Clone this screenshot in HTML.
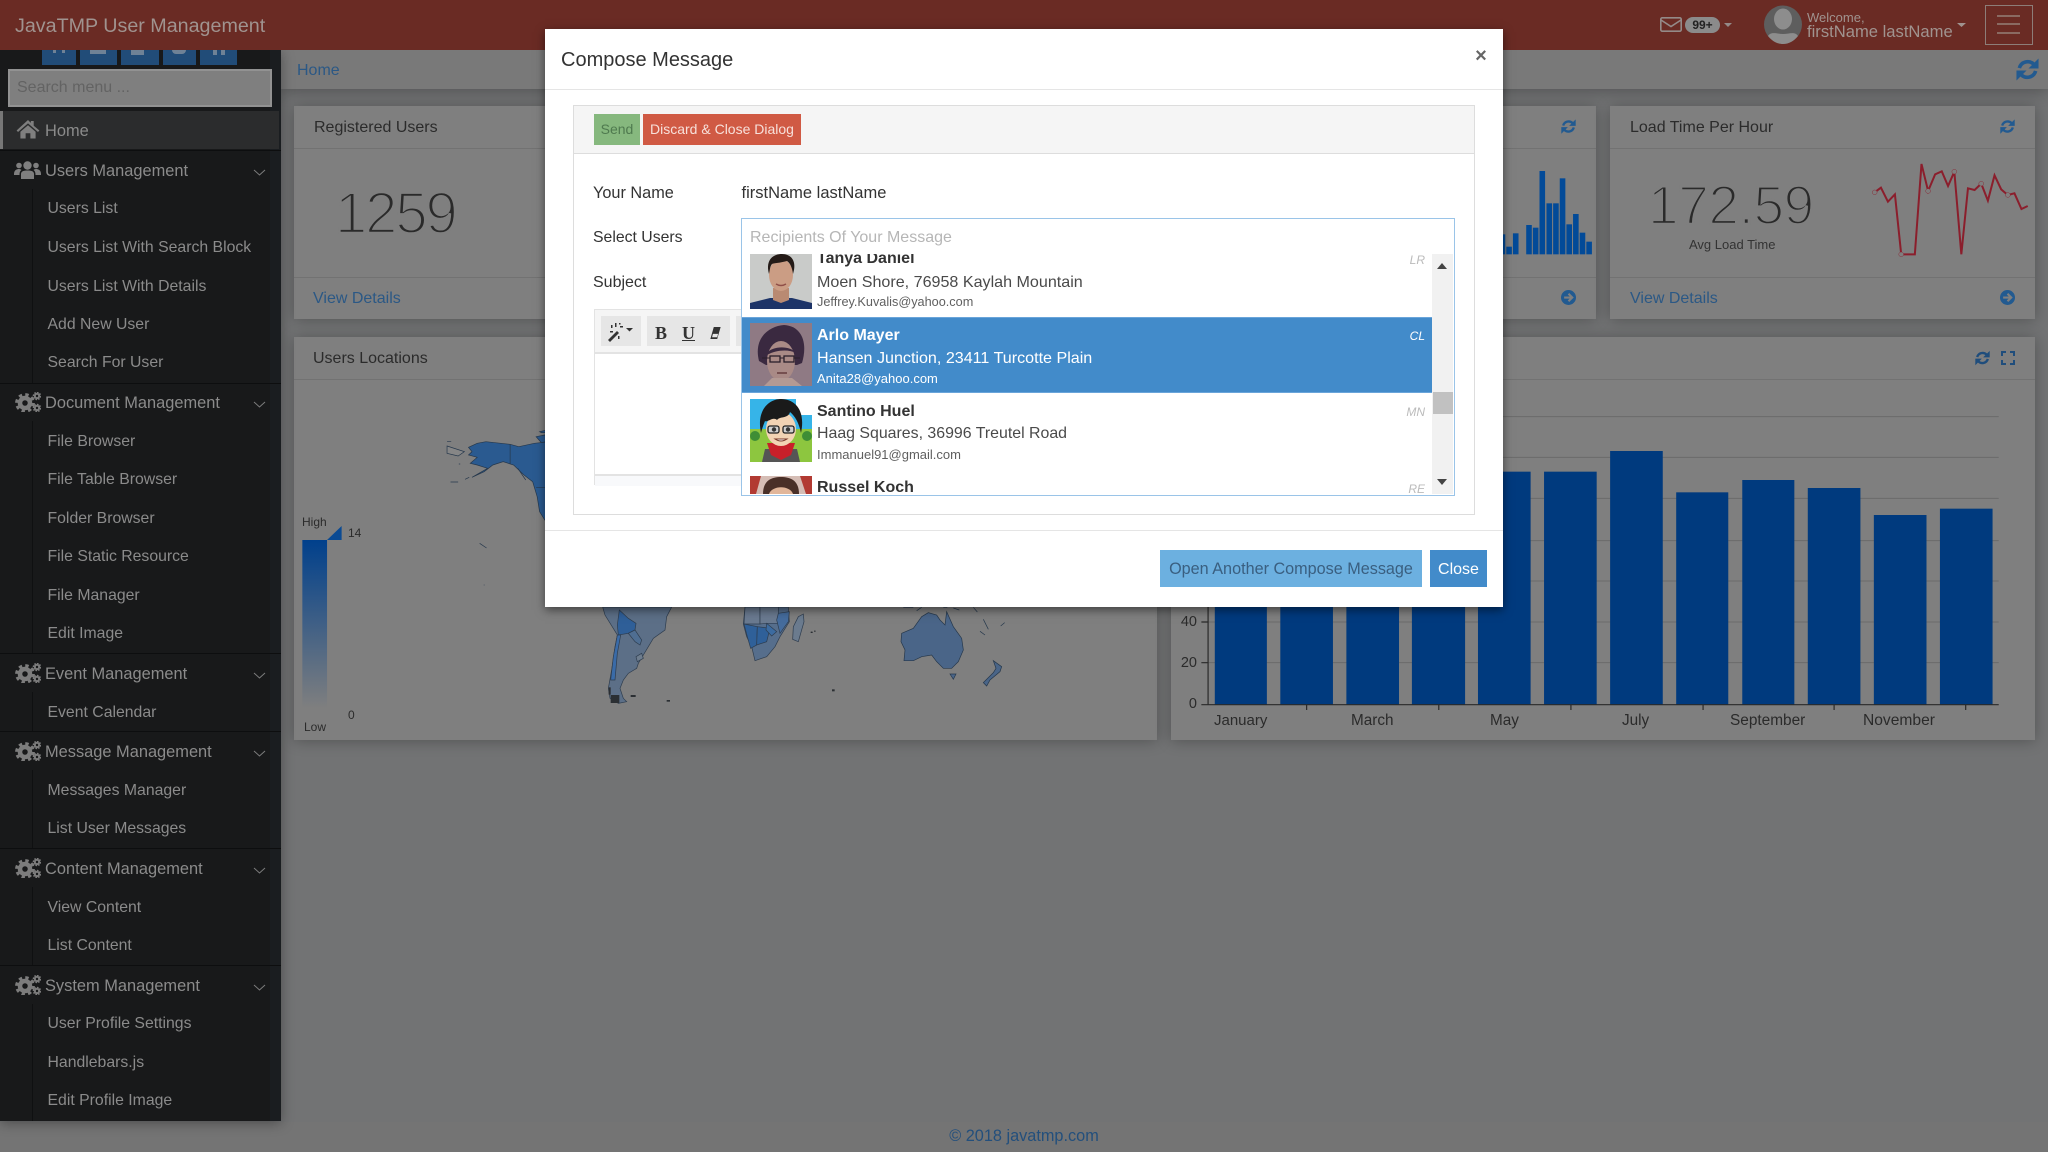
<!DOCTYPE html>
<html lang="en"><head><meta charset="utf-8"><title>JavaTMP User Management</title>
<style>
html,body{margin:0;padding:0;width:2048px;height:1152px;overflow:hidden;background:#727374}
body{position:relative;font-family:"Liberation Sans",Arial,sans-serif;font-size:16px;color:#2b2b2b}
.a{position:absolute}
.t{position:absolute;white-space:nowrap;line-height:20px;height:20px;margin-top:1px}
.card{position:absolute;background:#7f7f7f;box-shadow:0 1px 14px rgba(0,0,0,.28)}
.hl{position:absolute;height:1px;background:#727272}
.m{color:#8b8b8b;font-size:15.8px}
.g{color:#8b8b8b;font-size:16.4px}
.lnk{color:#2b5885}
.sl{position:absolute;left:32px;width:1px;background:#0f1011}
.dv{position:absolute;left:0;width:281px;height:1px;background:#0d0e0f}
svg{position:absolute;overflow:visible}
.ch{left:254px;width:11px;height:6px;fill:none;stroke:#7d7d7d;stroke-width:1}
.cg{left:15px;width:26px;height:20px;color:#7c7c7c}
.ic{color:#225a90}
.nm{font-weight:bold;color:#333}
.ad{color:#4a4a4a;font-size:16.1px}
.em{color:#5f5f5f;font-size:13px}
.tag{font-style:italic;font-size:12px;color:#bbb;text-align:right;width:30px;left:1395px}
.big{color:#2a2a2a;-webkit-text-stroke:2.4px #7f7f7f}
</style></head><body>
<svg width="0" height="0" style="position:absolute"><defs>
<symbol id="sync" viewBox="0 0 24 24"><path d="M3.500 10.500A9 9 0 0 1 18.500 6.500" fill="none" stroke="currentColor" stroke-width="3.800"/><polygon points="23.500,0.500 23.500,11 13,11" fill="currentColor"/><path d="M20.500 13.500A9 9 0 0 1 5.500 17.500" fill="none" stroke="currentColor" stroke-width="3.800"/><polygon points="0.500,23.500 0.500,13 11,13" fill="currentColor"/></symbol>
<symbol id="go" viewBox="0 0 24 24"><circle cx="12" cy="12" r="12" fill="currentColor"/><path d="M5 12H17M12 6l6 6-6 6" fill="none" stroke="#7f7f7f" stroke-width="3.400"/></symbol>
<symbol id="cogs" viewBox="0 0 26 20"><circle cx="10" cy="11" r="5" fill="none" stroke="currentColor" stroke-width="4.500"/><circle cx="10" cy="11" r="8.400" fill="none" stroke="currentColor" stroke-width="3" stroke-dasharray="3.400 3.200"/><circle cx="22" cy="4" r="2.200" fill="none" stroke="currentColor" stroke-width="2"/><circle cx="22" cy="4" r="3.600" fill="none" stroke="currentColor" stroke-width="1.400" stroke-dasharray="1.600 1.200"/><circle cx="22" cy="16" r="2.200" fill="none" stroke="currentColor" stroke-width="2"/><circle cx="22" cy="16" r="3.600" fill="none" stroke="currentColor" stroke-width="1.400" stroke-dasharray="1.600 1.200"/></symbol>
</defs></svg>

<div class="a" style="left:0;top:1122px;width:2048px;height:30px;background:#747474"></div>
<!-- main top bar -->
<div class="a" style="left:281px;top:50px;width:1767px;height:39px;background:#797979;box-shadow:0 2px 16px rgba(0,0,0,.3)"></div>
<div class="t lnk" style="left:297px;top:60px">Home</div>
<svg class="ic" style="left:2016px;top:58px;width:23px;height:23px"><use href="#sync"/></svg>

<!-- stat cards -->
<div class="card" style="left:294px;top:106px;width:400px;height:213px"></div>
<div class="hl" style="left:294px;top:148px;width:400px"></div><div class="hl" style="left:294px;top:277px;width:400px"></div>
<div class="t" style="left:314px;top:117px">Registered Users</div>
<div class="t big" style="left:335px;top:203px;font-size:58px;letter-spacing:-2.100px">1259</div>
<div class="t lnk" style="left:313px;top:288px">View Details</div>

<div class="card" style="left:1400px;top:106px;width:196px;height:213px"></div>
<div class="hl" style="left:1400px;top:148px;width:196px"></div><div class="hl" style="left:1400px;top:277px;width:196px"></div>
<svg class="ic" style="left:1561px;top:119px;width:15px;height:15px"><use href="#sync"/></svg>
<svg class="ic" style="left:1561px;top:290px;width:15px;height:15px"><use href="#go"/></svg>
<svg style="left:1500px;top:0;width:548px;height:340px" viewBox="0 0 1568 1020" preserveAspectRatio="none" fill="#024a98">
<rect x="8" y="703" width="7" height="60"/><rect x="18" y="740" width="16" height="23"/><rect x="37" y="700" width="16" height="63"/><rect x="75" y="675" width="16" height="88"/><rect x="94" y="683" width="16" height="80"/><rect x="113" y="513" width="16" height="250"/><rect x="133" y="610" width="16" height="153"/><rect x="152" y="610" width="16" height="153"/><rect x="171" y="535" width="16" height="228"/><rect x="190" y="673" width="16" height="90"/><rect x="209" y="642" width="16" height="121"/><rect x="228" y="698" width="16" height="65"/><rect x="247" y="725" width="16" height="38"/>
</svg>

<div class="card" style="left:1610px;top:106px;width:425px;height:213px"></div>
<div class="hl" style="left:1610px;top:148px;width:425px"></div><div class="hl" style="left:1610px;top:277px;width:425px"></div>
<div class="t" style="left:1630px;top:117px">Load Time Per Hour</div>
<svg class="ic" style="left:2000px;top:119px;width:15px;height:15px"><use href="#sync"/></svg>
<div class="t big" style="left:1648px;top:194px;font-size:55px;letter-spacing:-.4px">172.59</div>
<div class="t" style="left:1689px;top:234px;font-size:13px;color:#333">Avg Load Time</div>
<div class="t lnk" style="left:1630px;top:288px">View Details</div>
<svg class="ic" style="left:2000px;top:290px;width:15px;height:15px"><use href="#go"/></svg>
<svg style="left:1500px;top:0;width:548px;height:340px" viewBox="0 0 1568 1020" preserveAspectRatio="none">
<polyline fill="none" stroke="#8b1e2c" stroke-width="2" vector-effect="non-scaling-stroke" points="1072,577 1090,563 1110,605 1130,583 1148,763 1187,763 1206,492 1225,573 1245,523 1264,514 1282,558 1300,515 1320,763 1339,565 1358,570 1377,551 1396,602 1415,526 1434,568 1453,585 1472,580 1492,627 1510,618"/>
<g fill="#7f7f7f" stroke="#8b1e2c" stroke-width="1.200"><ellipse cx="1072" cy="577" rx="7" ry="7"/><ellipse cx="1148" cy="763" rx="7" ry="7"/><ellipse cx="1225" cy="573" rx="7" ry="7"/><ellipse cx="1300" cy="515" rx="7" ry="7"/><ellipse cx="1377" cy="551" rx="7" ry="7"/><ellipse cx="1453" cy="585" rx="7" ry="7"/></g>
</svg>

<!-- map card -->
<div class="card" style="left:294px;top:337px;width:863px;height:403px"></div>
<div class="hl" style="left:294px;top:379px;width:863px"></div>
<div class="t" style="left:313px;top:348px">Users Locations</div>
<svg style="left:290px;top:330px;width:880px;height:430px" viewBox="0 0 1568 1290" preserveAspectRatio="none">
<defs><linearGradient id="lg" x1="0" y1="0" x2="0" y2="1"><stop offset="0" stop-color="#00408c"/><stop offset="1" stop-color="#7f7f7f"/></linearGradient></defs>
<rect x="22" y="630" width="44" height="505" fill="url(#lg)"/><polygon points="66,630 92,588 92,630" fill="#0a4a93"/>
</svg>
<!-- north america -->
<svg style="left:420px;top:400px;width:130px;height:200px" viewBox="0 0 375 600" preserveAspectRatio="none">
<g stroke="#26384c" stroke-width=".7">
<path vector-effect="non-scaling-stroke" fill="#2a5a90" d="M140 142 165 130 190 125 260 133 285 140 330 130 375 125V372L360 360 345 335 338 290 325 245 300 225 270 195 240 185 210 195 185 215 150 232 195 205 165 195 145 190 165 172 140 165 150 155Z"/>
<path vector-effect="non-scaling-stroke" fill="#2a5a90" d="M335 110 360 105 375 112V122L350 128ZM345 95 375 88V98L350 98Z"/>
<path vector-effect="non-scaling-stroke" fill="none" d="M260 133V192M335 262H375"/>
<path vector-effect="non-scaling-stroke" fill="#868686" d="M78 138 128 155 110 168 78 160Z"/>
<path vector-effect="non-scaling-stroke" fill="none" d="M78 124H90M88 246H110M130 238 142 232M172 430 192 444M112 192H116M184 555H186M282 205 305 240"/>
</g></svg>
<!-- south america, southern africa -->
<svg style="left:560px;top:600px;width:260px;height:130px" viewBox="0 0 780 390" preserveAspectRatio="none">
<g stroke="#2e3d4f" stroke-width=".7">
<path vector-effect="non-scaling-stroke" fill="#5c6f87" d="M128 21H335L320 50 315 90 280 115 265 140 250 165 235 190 230 205 205 220 190 240 180 265 190 295 200 305 175 310 150 295 145 265 155 210 165 140 172 105 135 45Z"/>
<path vector-effect="non-scaling-stroke" fill="#2f5f98" d="M178 30 205 55 228 70 225 90 205 100 175 105 172 75Z"/>
<path vector-effect="non-scaling-stroke" fill="#3a6ba8" d="M172 105 182 105 172 160 165 240 152 240 160 170Z"/>
<path vector-effect="non-scaling-stroke" fill="#4f6e92" d="M205 100 225 90 245 120 240 135 225 125Z"/>
<path vector-effect="non-scaling-stroke" fill="#6e7d8e" d="M228 170 245 160 250 175 232 185Z"/>
<path vector-effect="non-scaling-stroke" fill="#566e8c" d="M555 21H685L688 65 660 110 645 140 620 170 585 182 575 140 560 110 550 72Z"/>
<path vector-effect="non-scaling-stroke" fill="#6a7a90" d="M555 21H600V72L552 72Z"/>
<path vector-effect="non-scaling-stroke" fill="#6a7a90" d="M600 21H655V70L620 70 600 72Z"/>
<path vector-effect="non-scaling-stroke" fill="#2f6099" d="M552 72 592 80 590 135 572 145 562 110Z"/>
<path vector-effect="non-scaling-stroke" fill="#2f6099" d="M592 80 630 85 620 125 590 135Z"/>
<path vector-effect="non-scaling-stroke" fill="#3c6ba0" d="M620 70 650 95 635 108 618 90Z"/>
<path vector-effect="non-scaling-stroke" fill="#456c9d" d="M655 40 688 35 685 65 660 100 650 60Z"/>
<path vector-effect="non-scaling-stroke" fill="#6b7b8e" d="M715 50 730 42 732 65 715 125 698 118 700 80Z"/>
</g>
<g fill="#2b2f33"><rect x="212" y="285" width="15" height="6"/><rect x="320" y="300" width="10" height="5"/><rect x="146" y="262" width="6" height="22"/><rect x="152" y="285" width="26" height="24"/><rect x="752" y="95" width="4" height="4"/><rect x="764" y="92" width="3" height="3"/></g>
</svg>
<!-- australia -->
<svg style="left:740px;top:600px;width:300px;height:130px" viewBox="0 0 900 390" preserveAspectRatio="none">
<g stroke="#26384c" stroke-width=".7">
<path vector-effect="non-scaling-stroke" fill="#4a6588" d="M485 100 520 85 545 50 565 38 590 45 600 60 615 75 620 35 640 80 665 115 670 150 655 185 635 205 610 205 590 185 575 165 545 170 520 182 492 182 495 150 483 125Z"/>
<path vector-effect="non-scaling-stroke" fill="#4a6588" d="M630 222H648L640 238Z"/>
<path vector-effect="non-scaling-stroke" fill="#4a6588" d="M760 182 785 200 780 215 750 240 740 258 730 248 760 218 768 205Z"/>
<path vector-effect="non-scaling-stroke" fill="none" d="M490 22H520M530 32 545 22M610 22H622M640 24 658 30M700 22 712 36M730 58 745 88M720 94 735 105M782 78 794 68"/>
</g>
<g fill="#2b2f33"><rect x="276" y="268" width="8" height="6"/><rect x="214" y="95" width="4" height="4"/><rect x="222" y="92" width="3" height="3"/></g>
</svg>
<div class="t" style="left:302px;top:511px;font-size:12px">High</div>
<div class="t" style="left:348px;top:522px;font-size:12px">14</div>
<div class="t" style="left:348px;top:704px;font-size:12px">0</div>
<div class="t" style="left:304px;top:716px;font-size:12px">Low</div>

<!-- chart card -->
<div class="card" style="left:1171px;top:337px;width:864px;height:403px"></div>
<div class="hl" style="left:1171px;top:379px;width:864px"></div>
<svg style="left:1975px;top:350px;width:15px;height:16px;color:#1f4d7c"><use href="#sync"/></svg>
<svg style="left:2001px;top:351px;width:14px;height:14px" viewBox="0 0 14 14" fill="none" stroke="#1f4d7c" stroke-width="2"><path d="M1 5V1H5M9 1H13V5M13 9V13H9M5 13H1V9"/></svg>
<svg style="left:1170px;top:330px;width:878px;height:430px" viewBox="0 0 1568 1290" preserveAspectRatio="none">
<g stroke="#6b6b6b" stroke-width="1"><path vector-effect="non-scaling-stroke" d="M60 260H1480M60 382H1480M60 505H1480M60 632H1480M60 753H1480M60 876H1480M60 998H1480"/></g>
<g fill="#003a7e"><rect x="80" y="700" width="93" height="424"/><rect x="197" y="700" width="94" height="424"/><rect x="315" y="700" width="94" height="424"/><rect x="432" y="700" width="95" height="424"/><rect x="550" y="425" width="94" height="699"/><rect x="668" y="425" width="94" height="699"/><rect x="786" y="363" width="94" height="761"/><rect x="904" y="487" width="93" height="637"/><rect x="1022" y="450" width="93" height="674"/><rect x="1139" y="474" width="94" height="650"/><rect x="1257" y="555" width="94" height="569"/><rect x="1375" y="536" width="94" height="588"/></g>
<path fill="none" stroke="#2a2a2a" stroke-width="1.200" vector-effect="non-scaling-stroke" d="M68 830V1124M56 876H68M56 998H68M56 1124H1480M244 1124V1140M480 1124V1140M716 1124V1140M952 1124V1140M1186 1124V1140M1421 1124V1140"/>
</svg>
<div class="t" style="left:1170px;width:27px;text-align:right;top:611px;font-size:14.500px">40</div>
<div class="t" style="left:1170px;width:27px;text-align:right;top:652px;font-size:14.500px">20</div>
<div class="t" style="left:1170px;width:27px;text-align:right;top:693px;font-size:14.500px">0</div>
<div class="t" style="left:1214px;top:710px;font-size:15px">January</div>
<div class="t" style="left:1351px;top:710px;font-size:15.300px">March</div>
<div class="t" style="left:1490px;top:710px;font-size:15.300px">May</div>
<div class="t" style="left:1622px;top:710px;font-size:15.300px">July</div>
<div class="t" style="left:1730px;top:710px;font-size:15.400px">September</div>
<div class="t" style="left:1863px;top:710px;font-size:15.600px">November</div>

<div class="t" style="left:0;width:2048px;text-align:center;top:1125px;color:#234f7c;font-size:16.300px">© 2018 javatmp.com</div>

<!-- sidebar -->
<div class="a" style="left:0;top:50px;width:281px;height:1071px;background:#18191a;box-shadow:0 2px 12px rgba(0,0,0,.35)"></div>
<div class="a" style="left:270px;top:50px;width:11px;height:1071px;background:#1a1d20"></div>
<div class="a" style="left:42px;top:50px;width:34px;height:15px;background:#214c78"></div>
<div class="a" style="left:80px;top:50px;width:37px;height:15px;background:#214c78"></div>
<div class="a" style="left:121px;top:50px;width:38px;height:15px;background:#214c78"></div>
<div class="a" style="left:163px;top:50px;width:33px;height:15px;background:#214c78"></div>
<div class="a" style="left:200px;top:50px;width:37px;height:15px;background:#214c78"></div>
<div class="a" style="left:53px;top:50px;width:3px;height:3px;background:#6f8296"></div><div class="a" style="left:62px;top:50px;width:3px;height:3px;background:#6f8296"></div>
<div class="a" style="left:90px;top:50px;width:16px;height:4px;background:#6f8296"></div>
<div class="a" style="left:131px;top:50px;width:13px;height:5px;background:#6f8296"></div>
<div class="a" style="left:172px;top:50px;width:14px;height:4px;border-radius:0 0 7px 7px;background:#6f8296"></div>
<div class="a" style="left:213px;top:50px;width:4px;height:5px;background:#6f8296"></div><div class="a" style="left:221px;top:50px;width:4px;height:5px;background:#6f8296"></div>
<div class="a" style="left:8px;top:69px;width:260px;height:34px;background:#7f7f7f;border:2px solid #929292"></div>
<div class="t" style="left:17px;top:77px;color:#636363">Search menu ...</div>
<div class="a" style="left:0;top:111px;width:279px;height:38px;background:#2b2c2d"></div>
<div class="a" style="left:0;top:111px;width:3px;height:38px;background:#777"></div>
<svg style="left:16px;top:120px;width:24px;height:19px" viewBox="0 0 24 20" fill="#7f7f7f"><path d="M12 0 15 3V1H18V6L24 11 22.500 12.600 12 3.500 1.500 12.600 0 11ZM4 12.400 12 5.500 20 12.400V19.500H14.500V14H9.500V19.500H4Z"/></svg>
<div class="t g" style="left:45px;top:120px">Home</div>
<div class="dv" style="top:150px"></div>

<svg style="left:14px;top:161px;width:27px;height:18px" viewBox="0 0 27 18" fill="#7f7f7f"><circle cx="13.500" cy="4.500" r="4.200"/><circle cx="5" cy="4.500" r="2.800"/><circle cx="22" cy="4.500" r="2.800"/><path d="M7 18V13C7 10 10 9.500 13.500 9.500S20 10 20 13V18Z"/><path d="M0 13C0 9 3 8 5 8 6.500 8 7 8.500 7.500 9 6 10 5.500 11.500 5.500 14H0ZM27 13C27 9 24 8 22 8 20.500 8 20 8.500 19.500 9 21 10 21.500 11.500 21.500 14H27Z"/></svg>
<div class="t g" style="left:45px;top:160px">Users Management</div>
<svg class="ch" style="top:170px" viewBox="0 0 11 6"><path d="M0 0 5.500 5 11 0"/></svg>
<div class="sl" style="top:189px;height:194px"></div>
<div class="t m" style="left:47.500px;top:198px">Users List</div>
<div class="t m" style="left:47.500px;top:237px">Users List With Search Block</div>
<div class="t m" style="left:47.500px;top:276px">Users List With Details</div>
<div class="t m" style="left:47.500px;top:314px">Add New User</div>
<div class="t m" style="left:47.500px;top:352px">Search For User</div>
<div class="dv" style="top:383px"></div>

<svg class="cg" style="top:392px"><use href="#cogs"/></svg>
<div class="t g" style="left:45px;top:392px">Document Management</div>
<svg class="ch" style="top:402px" viewBox="0 0 11 6"><path d="M0 0 5.500 5 11 0"/></svg>
<div class="sl" style="top:421px;height:232px"></div>
<div class="t m" style="left:47.500px;top:431px">File Browser</div>
<div class="t m" style="left:47.500px;top:469px">File Table Browser</div>
<div class="t m" style="left:47.500px;top:508px">Folder Browser</div>
<div class="t m" style="left:47.500px;top:546px">File Static Resource</div>
<div class="t m" style="left:47.500px;top:585px">File Manager</div>
<div class="t m" style="left:47.500px;top:623px">Edit Image</div>
<div class="dv" style="top:653px"></div>

<svg class="cg" style="top:663px"><use href="#cogs"/></svg>
<div class="t g" style="left:45px;top:663px">Event Management</div>
<svg class="ch" style="top:673px" viewBox="0 0 11 6"><path d="M0 0 5.500 5 11 0"/></svg>
<div class="sl" style="top:692px;height:39px"></div>
<div class="t m" style="left:47.500px;top:702px">Event Calendar</div>
<div class="dv" style="top:731px"></div>

<svg class="cg" style="top:741px"><use href="#cogs"/></svg>
<div class="t g" style="left:45px;top:741px">Message Management</div>
<svg class="ch" style="top:751px" viewBox="0 0 11 6"><path d="M0 0 5.500 5 11 0"/></svg>
<div class="sl" style="top:770px;height:78px"></div>
<div class="t m" style="left:47.500px;top:780px">Messages Manager</div>
<div class="t m" style="left:47.500px;top:818px">List User Messages</div>
<div class="dv" style="top:848px"></div>

<svg class="cg" style="top:858px"><use href="#cogs"/></svg>
<div class="t g" style="left:45px;top:858px">Content Management</div>
<svg class="ch" style="top:868px" viewBox="0 0 11 6"><path d="M0 0 5.500 5 11 0"/></svg>
<div class="sl" style="top:887px;height:78px"></div>
<div class="t m" style="left:47.500px;top:897px">View Content</div>
<div class="t m" style="left:47.500px;top:935px">List Content</div>
<div class="dv" style="top:965px"></div>

<svg class="cg" style="top:975px"><use href="#cogs"/></svg>
<div class="t g" style="left:45px;top:975px">System Management</div>
<svg class="ch" style="top:985px" viewBox="0 0 11 6"><path d="M0 0 5.500 5 11 0"/></svg>
<div class="sl" style="top:1004px;height:117px"></div>
<div class="t m" style="left:47.500px;top:1013px">User Profile Settings</div>
<div class="t m" style="left:47.500px;top:1052px">Handlebars.js</div>
<div class="t m" style="left:47.500px;top:1090px">Edit Profile Image</div>

<!-- header -->
<div class="a" style="left:0;top:0;width:2048px;height:50px;background:#6a2b24"></div>
<div class="t" style="left:15px;top:15px;font-size:19.700px;color:#a0938f">JavaTMP User Management</div>
<svg style="left:1660px;top:17px;width:22px;height:15px" viewBox="0 0 22 15" fill="none" stroke="#948a88" stroke-width="1.600"><rect x=".8" y=".8" width="20.400" height="13.400" rx="1.500"/><path d="M1 3 11 9.500 21 3"/></svg>
<div class="a" style="left:1685px;top:17px;width:35px;height:16px;border-radius:8px;background:#8b8b8b;color:#222;font-size:12px;font-weight:bold;text-align:center;line-height:16px">99+</div>
<svg style="left:1724px;top:23px;width:8px;height:4px" viewBox="0 0 8 4" fill="#948a88"><path d="M0 0H8L4 4Z"/></svg>
<svg style="left:1764px;top:5px;width:38px;height:39px" viewBox="0 0 38 39"><circle cx="19" cy="19.500" r="19" fill="#5e5e5e"/><ellipse cx="19" cy="14" rx="9" ry="10.500" fill="#8d8d8d"/><path d="M4 31C7 26 13 29 19 29S31 26 34 31C30 36 25 39 19 39S8 36 4 31Z" fill="#8d8d8d"/></svg>
<div class="t" style="left:1807px;top:7px;font-size:13px;color:#a0938f">Welcome,</div>
<div class="t" style="left:1807px;top:21px;font-size:16.600px;color:#a0938f">firstName lastName</div>
<svg style="left:1957px;top:23px;width:9px;height:4px" viewBox="0 0 9 4" fill="#a0938f"><path d="M0 0H9L4.500 4Z"/></svg>
<div class="a" style="left:1985px;top:5px;width:46px;height:38px;border:1px solid #8d7d78"></div>
<div class="a" style="left:1997px;top:15px;width:23px;height:1.500px;background:#8a6a62"></div>
<div class="a" style="left:1997px;top:23px;width:23px;height:1.500px;background:#8a6a62"></div>
<div class="a" style="left:1997px;top:32px;width:23px;height:1.500px;background:#8a6a62"></div>

<!-- modal -->
<div class="a" style="left:545px;top:29px;width:958px;height:578px;background:#fff;box-shadow:0 3px 9px rgba(0,0,0,.5)"></div>
<div class="a" style="left:545px;top:89px;width:958px;height:1px;background:#e5e5e5"></div>
<div class="t" style="left:561px;top:49px;font-size:20px;color:#333">Compose Message</div>
<div class="t" style="left:1474px;top:45px;width:14px;text-align:center;font-size:20px;font-weight:bold;color:#666">×</div>
<div class="a" style="left:573px;top:105px;width:900px;height:408px;border:1px solid #ddd"></div>
<div class="a" style="left:574px;top:106px;width:900px;height:47px;background:#f5f5f5;border-bottom:1px solid #ddd"></div>
<div class="a" style="left:594px;top:114px;width:46px;height:31px;background:#86b87e;color:#4f7a4f;font-size:14px;text-align:center;line-height:31px">Send</div>
<div class="a" style="left:643px;top:114px;width:158px;height:31px;background:#d05a44;color:#f7e0da;font-size:14px;text-align:center;line-height:31px;white-space:nowrap">Discard &amp; Close Dialog</div>
<div class="t" style="left:593px;top:182px;color:#333;font-size:16.300px">Your Name</div>
<div class="t" style="left:741.500px;top:182px;font-size:16.500px;color:#333">firstName lastName</div>
<div class="t" style="left:593px;top:227px;color:#333;font-size:15.800px">Select Users</div>
<div class="t" style="left:593px;top:272px;color:#333">Subject</div>

<!-- editor -->
<div class="a" style="left:594px;top:309px;width:160px;height:176px;background:#fff;border:1px solid #e3e3e3;box-sizing:border-box"></div>
<div class="a" style="left:595px;top:310px;width:160px;height:42px;background:#f5f5f5;border-bottom:2px solid #e3e3e3"></div>
<div class="a" style="left:601px;top:316px;width:40px;height:30px;background:#e6e6e6"></div>
<div class="a" style="left:647px;top:316px;width:83px;height:30px;background:#e6e6e6"></div>
<div class="a" style="left:736px;top:316px;width:20px;height:30px;background:#e6e6e6"></div>
<div class="a" style="left:595px;top:474px;width:160px;height:10px;background:#f8f9fb;border-top:2px solid #e3e3e3"></div>
<svg style="left:606px;top:322px;width:28px;height:20px" viewBox="0 0 28 20" fill="#333"><path d="M2 18 11 9 13 11 4 20Z"/><rect x="5" y="3" width="1.500" height="3"/><rect x="9" y="1" width="1.500" height="4"/><rect x="14" y="4" width="3" height="1.500"/><rect x="13" y="1" width="1.500" height="1.500"/><rect x="4" y="9" width="3" height="1.500"/><rect x="12" y="14" width="1.500" height="3"/><path d="M20 6H27L23.500 9.500Z"/></svg>
<div class="t" style="left:655px;top:322px;font-family:'Liberation Serif',serif;font-weight:bold;font-size:18px;color:#333">B</div>
<div class="t" style="left:682px;top:322px;font-family:'Liberation Serif',serif;font-weight:bold;font-size:18px;color:#333;text-decoration:underline">U</div>
<svg style="left:710px;top:327px;width:11px;height:12px" viewBox="0 0 12 14"><path d="M4 0H12L8 14H0Z" fill="#333"/><path d="M3 8H9L8 12H2Z" fill="#e6e6e6"/></svg>

<!-- select box -->
<div class="a" style="left:741px;top:218px;width:712px;height:276px;background:#fff;border:1px solid #9ac4e8"></div>
<div class="t" style="left:750px;top:227px;color:#b6b6b6">Recipients Of Your Message</div>
<div class="a" style="left:742px;top:254px;width:690px;height:240px;overflow:hidden">
  <div class="t nm" style="left:75px;top:-6px">Tanya Daniel</div>
  <div class="t ad" style="left:75px;top:17px">Moen Shore, 76958 Kaylah Mountain</div>
  <div class="t em" style="left:75px;top:37px;font-size:12.700px">Jeffrey.Kuvalis@yahoo.com</div>
  <svg style="left:8px;top:0;width:62px;height:55px" viewBox="0 0 62 55"><rect width="62" height="55" fill="#c9cbc9"/><path d="M0 55V49L20 44H42L62 49V55Z" fill="#1d3468"/><path d="M23 34H39V46L31 49 23 46Z" fill="#b98a72"/><ellipse cx="31" cy="21" rx="12" ry="16" fill="#cb9d84"/><path d="M19 20C15 5 24 0 32 0 42 0 47 8 43 20 42 13 40 9 37 7 30 9 24 9 22 10 20 12 20 16 19 20Z" fill="#241b17"/><path d="M26 30Q31 33 36 30" stroke="#8f4f48" stroke-width="1.500" fill="none"/></svg>
</div>
<div class="a" style="left:742px;top:317px;width:690px;height:76px;background:#428bca;border-top:1px solid #6aa5da;border-bottom:1px solid #6aa5da;box-sizing:border-box"></div>
<svg style="left:750px;top:323px;width:62px;height:63px" viewBox="0 0 62 63"><rect width="62" height="63" fill="#8f7a84"/><path d="M9 38C3 14 20 3 34 2 52 3 58 20 52 40L47 42 16 42Z" fill="#3a2940"/><ellipse cx="31" cy="38" rx="14" ry="20" fill="#a98a86"/><path d="M17 30C22 23 40 22 46 30 38 26 26 27 17 32Z" fill="#3a2940"/><rect x="20" y="33" width="10" height="6" fill="none" stroke="#2a1f2a" stroke-width="1.300"/><rect x="34" y="33" width="10" height="6" fill="none" stroke="#2a1f2a" stroke-width="1.300"/><path d="M12 35H20M44 35H50M30 35H34" stroke="#2a1f2a"/><path d="M27 50H37" stroke="#70494a" stroke-width="1.800"/><path d="M14 63 22 55H42L52 63Z" fill="#b39a94"/></svg>
<svg style="left:750px;top:399px;width:62px;height:63px" viewBox="0 0 62 63"><rect width="62" height="30" fill="#36b4e8"/><rect x="46" y="0" width="16" height="16" fill="#fff"/><rect y="30" width="62" height="33" fill="#8dc63f"/><circle cx="5" cy="37" r="5" fill="#3e8e35"/><circle cx="57" cy="37" r="5" fill="#3e8e35"/><path d="M12 63 15 50H47L50 63Z" fill="#555"/><path d="M17 44H45L41 56 31 61 21 56Z" fill="#c8202a"/><ellipse cx="31" cy="30" rx="15" ry="17" fill="#f2d3b4"/><path d="M11 34C6 10 20 0 31 0 44 0 56 10 51 34 49 24 45 17 40 13 38 20 30 17 27 21 23 17 17 24 15 22 13 27 12 30 11 34Z" fill="#1a1a1a"/><rect x="18" y="27" width="11" height="7" rx="2" fill="#cfcfcf" stroke="#222" stroke-width="1.300"/><rect x="33" y="27" width="11" height="7" rx="2" fill="#cfcfcf" stroke="#222" stroke-width="1.300"/><circle cx="24" cy="30.500" r="2.200" fill="#333"/><circle cx="38" cy="30.500" r="2.200" fill="#333"/><path d="M25 40Q31 44 37 40Z" stroke="#7a3a2a" stroke-width="1" fill="#fff"/></svg>
<svg style="left:750px;top:476px;width:62px;height:18px" viewBox="0 0 62 18"><rect width="62" height="18" fill="#d5bdb5"/><path d="M0 0H11L6 18H0ZM50 0H62V18H56Z" fill="#b23a32"/><path d="M13 18C13 4 22 1 31 1S49 4 49 18Z" fill="#4a3028"/><path d="M19 18C22 9 40 9 43 18Z" fill="#e1b69a"/></svg>
<div class="t nm" style="left:817px;top:325px;color:#fff">Arlo Mayer</div>
<div class="t" style="left:817px;top:347px;font-size:16.100px;color:#fff">Hansen Junction, 23411 Turcotte Plain</div>
<div class="t" style="left:817px;top:368px;font-size:13px;color:#fff">Anita28@yahoo.com</div>
<div class="t nm" style="left:817px;top:401px">Santino Huel</div>
<div class="t ad" style="left:817px;top:423px;font-size:15.900px">Haag Squares, 36996 Treutel Road</div>
<div class="t em" style="left:817px;top:444px">Immanuel91@gmail.com</div>
<div class="a" style="left:817px;top:476px;width:300px;height:18px;overflow:hidden"><div class="t nm" style="left:0;top:1px">Russel Koch</div></div>
<div class="t tag" style="top:249px">LR</div>
<div class="t tag" style="top:325px;color:#fff">CL</div>
<div class="t tag" style="top:401px">MN</div>
<div class="a" style="left:1395px;top:476px;width:30px;height:18px;overflow:hidden"><div class="t tag" style="left:0;top:2px">RE</div></div>
<div class="a" style="left:1432px;top:254px;width:21px;height:240px;background:#f1f1f1"></div>
<div class="a" style="left:1433px;top:392px;width:20px;height:22px;background:#c1c1c1"></div>
<svg style="left:1437px;top:263px;width:10px;height:6px" viewBox="0 0 10 6" fill="#444"><path d="M5 0 10 6H0Z"/></svg>
<svg style="left:1437px;top:479px;width:10px;height:6px" viewBox="0 0 10 6" fill="#444"><path d="M0 0H10L5 6Z"/></svg>

<div class="a" style="left:545px;top:530px;width:958px;height:1px;background:#e5e5e5"></div>
<div class="a" style="left:1160px;top:550px;width:262px;height:37px;background:#6cb0e0;color:#3a5f80;text-align:center;line-height:39px;white-space:nowrap;font-size:16.200px">Open Another Compose Message</div>
<div class="a" style="left:1430px;top:550px;width:57px;height:37px;background:#428bca;color:#fff;text-align:center;line-height:39px">Close</div>
</body></html>
